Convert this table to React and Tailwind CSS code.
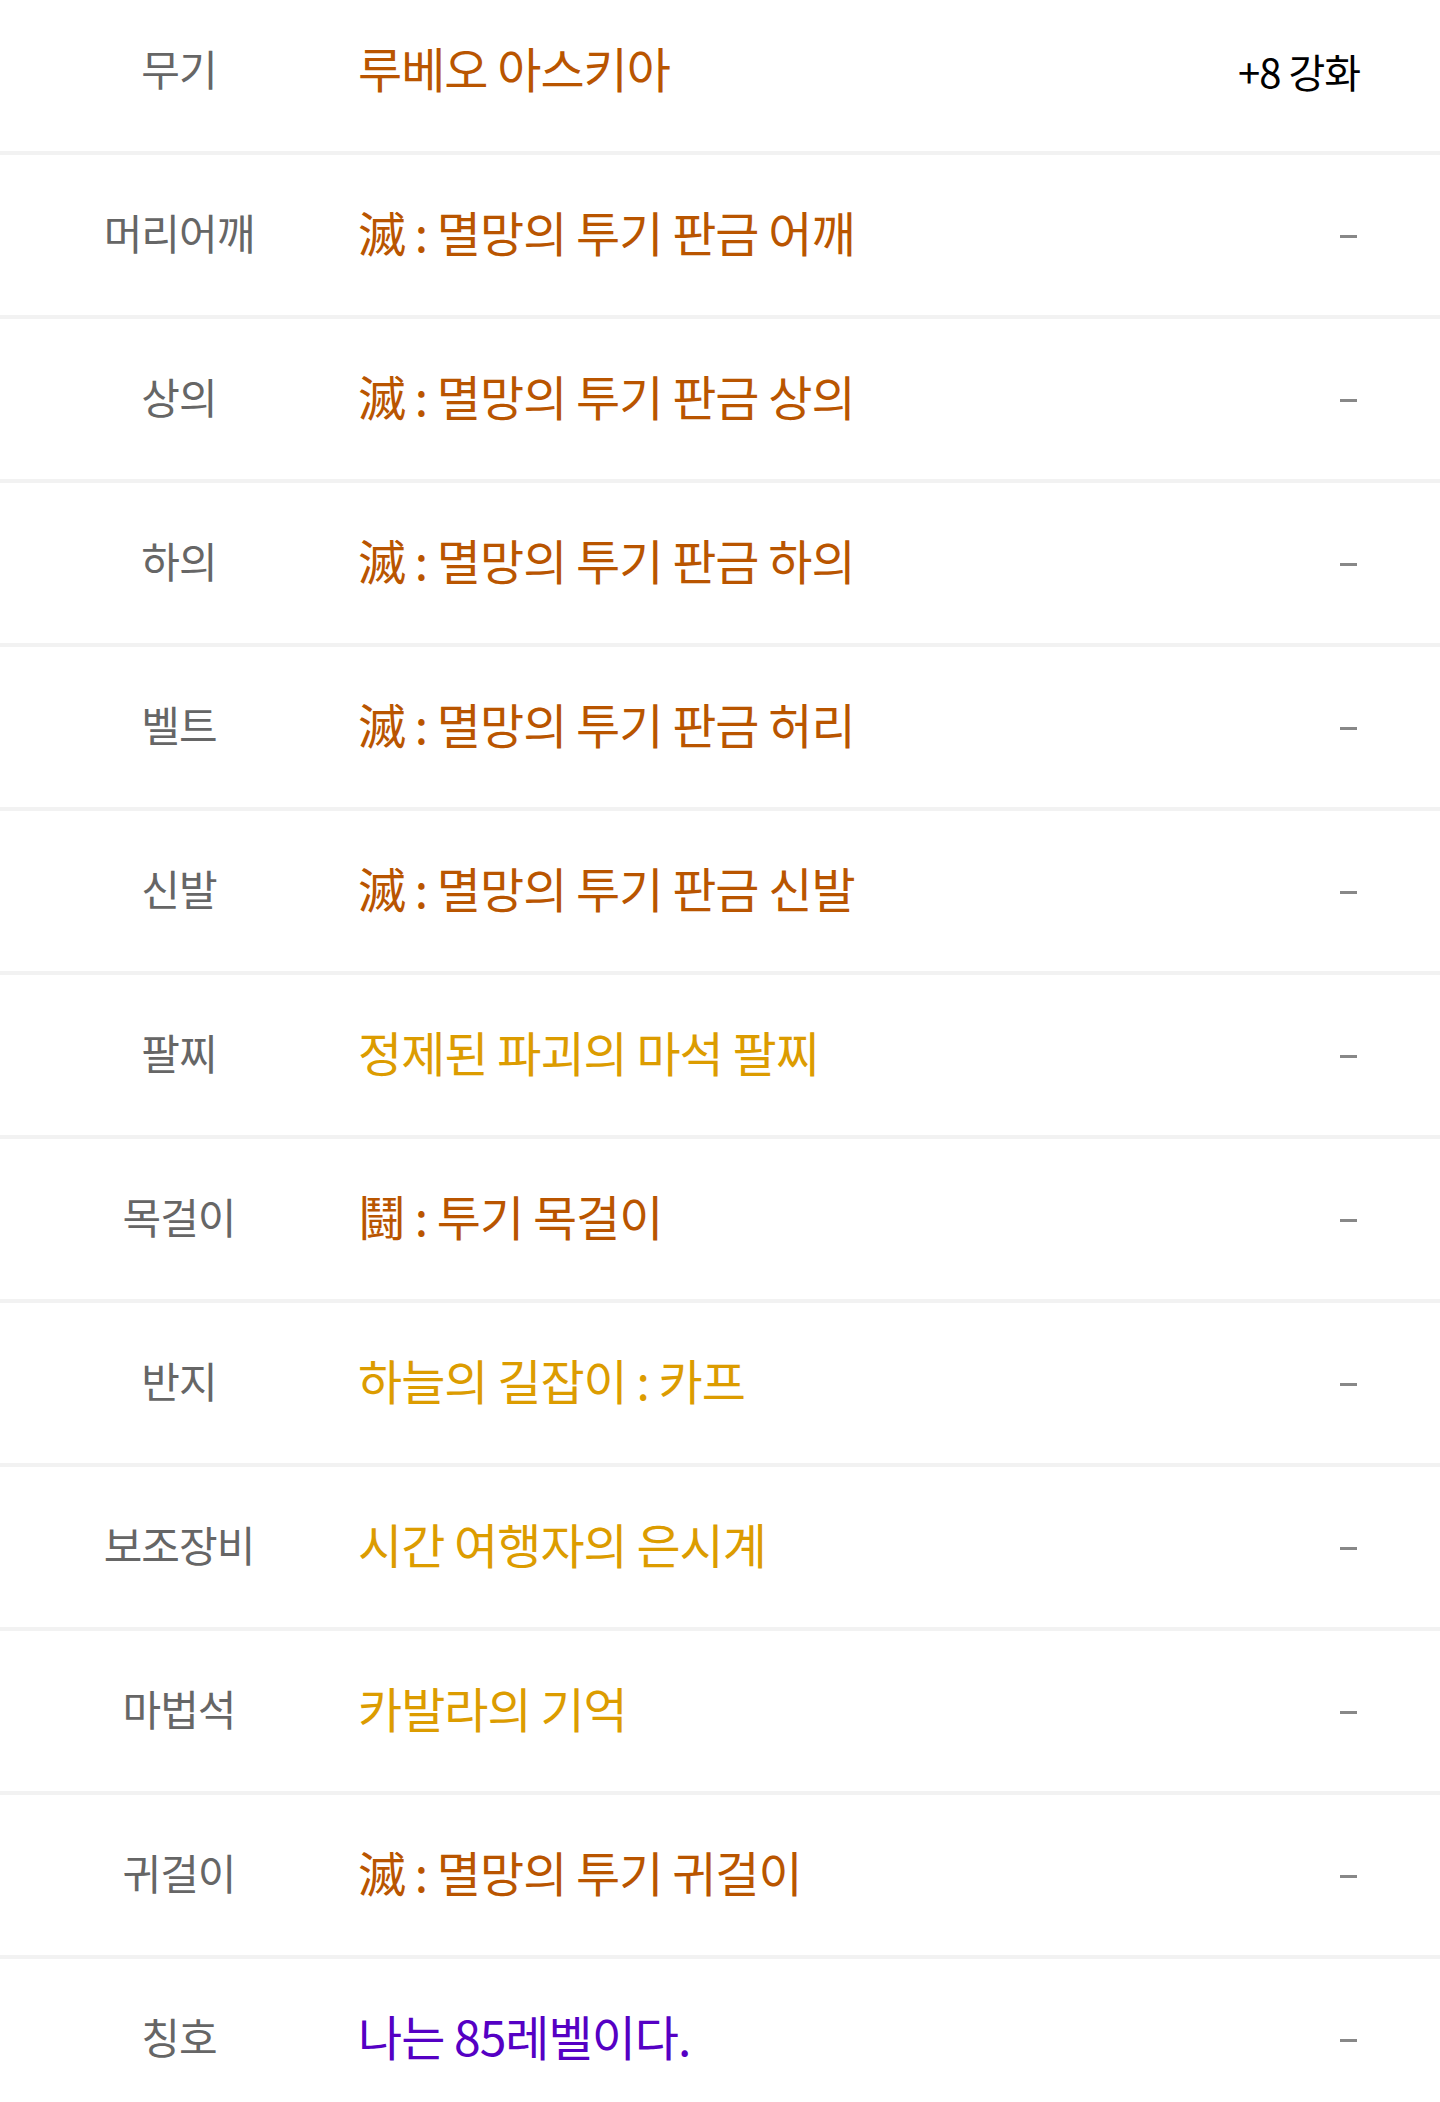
import React from 'react';

const items = [
  { slot: '무기', name: '루베오 아스키아', color: 'text-[#b95500]', extra: '+8 강화' },
  { slot: '머리어깨', name: '滅 : 멸망의 투기 판금 어깨', color: 'text-[#b95500]' },
  { slot: '상의', name: '滅 : 멸망의 투기 판금 상의', color: 'text-[#b95500]' },
  { slot: '하의', name: '滅 : 멸망의 투기 판금 하의', color: 'text-[#b95500]' },
  { slot: '벨트', name: '滅 : 멸망의 투기 판금 허리', color: 'text-[#b95500]' },
  { slot: '신발', name: '滅 : 멸망의 투기 판금 신발', color: 'text-[#b95500]' },
  { slot: '팔찌', name: '정제된 파괴의 마석 팔찌', color: 'text-[#dc9c00]' },
  { slot: '목걸이', name: '鬪 : 투기 목걸이', color: 'text-[#b95500]' },
  { slot: '반지', name: '하늘의 길잡이 : 카프', color: 'text-[#dc9c00]' },
  { slot: '보조장비', name: '시간 여행자의 은시계', color: 'text-[#dc9c00]' },
  { slot: '마법석', name: '카발라의 기억', color: 'text-[#dc9c00]' },
  { slot: '귀걸이', name: '滅 : 멸망의 투기 귀걸이', color: 'text-[#b95500]' },
  { slot: '칭호', name: '나는 85레벨이다.', color: 'text-[#5500c4]' },
];

function EquipRow({ item }) {
  return (
    <div className="flex items-center h-[160px] pb-[8px] bg-white">
      <div className="w-[358px] text-center text-[42px] text-[#666666] tracking-[-1px]">{item.slot}</div>
      <div className={`flex-1 text-[48px] tracking-[-1px] ${item.color}`}>{item.name}</div>
      <div className="pr-[80px] text-right">
        {item.extra ? (
          <span className="block mt-[8px] text-[40px] text-black tracking-[-1px]">{item.extra}</span>
        ) : (
          <span className="block mr-[3px] mt-[10px] w-[17px] h-[3px] bg-[#888888]" />
        )}
      </div>
    </div>
  );
}

export default function App() {
  return (
    <div className="w-[1440px] bg-white overflow-hidden h-[2102px]" style={{ fontFamily: '"Noto Sans CJK KR", "Noto Sans", sans-serif' }}>
      <div className="-mt-[9px] flex flex-col gap-[4px] bg-[#f2f2f2]">
        {items.map((item) => (
          <EquipRow key={item.slot} item={item} />
        ))}
      </div>
    </div>
  );
}
